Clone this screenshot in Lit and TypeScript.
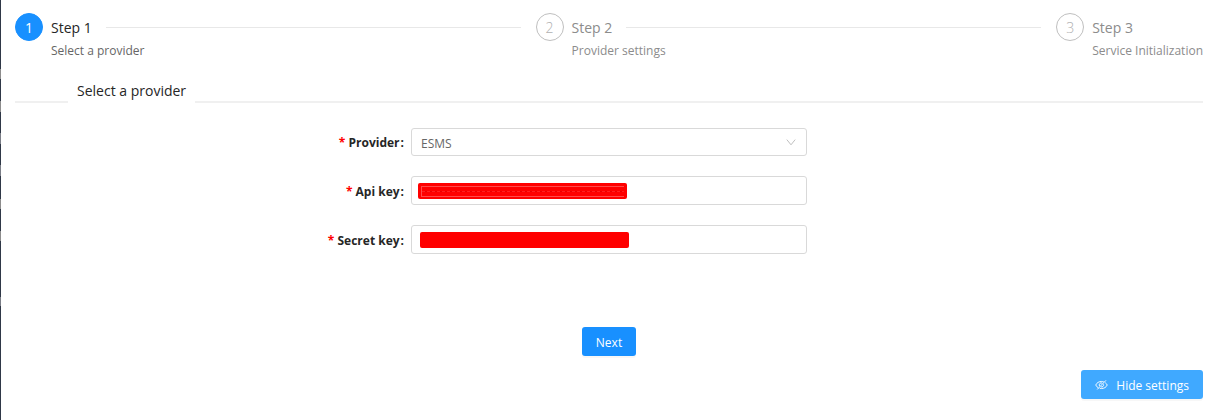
import { LitElement, html, css, svg } from "lit";
import { customElement, property } from "lit/decorators.js";

interface Step {
  title: string;
  description: string;
}

const steps: Step[] = [
  { title: "Step 1", description: "Select a provider" },
  { title: "Step 2", description: "Provider settings" },
  { title: "Step 3", description: "Service Initialization" },
];

@customElement("wizard-steps")
class WizardSteps extends LitElement {
  @property({ type: Number }) current = 0;

  static styles = css`
    :host { display: block; }
    .steps { display: flex; gap: 15px; margin: 0; padding: 0; list-style: none; }
    .step { display: flex; gap: 8px; color: #8c8c8c; }
    .step:not(:last-child) { flex: 1; }
    .badge {
      box-sizing: border-box;
      flex: none;
      width: 28px;
      height: 28px;
      border: 1px solid #bfbfbf;
      border-radius: 50%;
      color: #b0b0b0;
      font-size: 14px;
      font-weight: 300;
      line-height: 28px;
      text-align: center;
    }
    .body { flex: 1; }
    .head { display: flex; align-items: center; gap: 14px; height: 28px; }
    .title { font-size: 14px; line-height: 28px; padding-top: 2px; }
    .line { flex: 1; height: 1px; background: #e8e8e8; }
    .description { font-size: 12px; line-height: 20px; white-space: nowrap; }
    .active .badge { background: #1890ff; border-color: #1890ff; color: #fff; font-weight: 400; }
    .active .title { color: #262626; font-weight: 500; }
    .active .description { color: #666; }
  `;

  render() {
    return html`<ol class="steps">
      ${steps.map(
        (s, i) => html`<li class="step ${i === this.current ? "active" : ""}">
          <span class="badge">${i + 1}</span>
          <div class="body">
            <div class="head">
              <span class="title">${s.title}</span>
              ${i < steps.length - 1 ? html`<span class="line"></span>` : ""}
            </div>
            <div class="description">${s.description}</div>
          </div>
        </li>`
      )}
    </ol>`;
  }
}

const chevron = svg`<svg class="chevron" viewBox="0 0 10 7" width="10" height="7" fill="none" stroke="#bfbfbf" aria-hidden="true">
  <path d="M.8.6 5 5.8 9.2.6" /></svg>`;

const eyeOff = svg`<svg viewBox="0 0 14 12" width="13" height="12" fill="none" stroke="currentColor" aria-hidden="true">
  <path d="M3.7 9.1C2.4 8.4 1.3 7.300.8 6 2 3.500 4.200 2.200 7 2.200c.9 0 1.700.1 2.400.4M11 3.500c.9.600 1.700 1.500 2.200 2.500-1.200 2.500-3.400 3.800-6.200 3.800-.7 0-1.300-.1-1.900-.2" />
  <path d="M11.800 1 2.400 10.800M4.900 7.200A2.300 2.300 0 0 1 7.800 3.900M9.200 5.300A2.300 2.300 0 0 1 6.400 8.100" /></svg>`;

@customElement("app-root")
class AppRoot extends LitElement {
  static styles = css`
    :host {
      display: block;
      box-sizing: border-box;
      min-height: 100vh;
      padding: 13px 13px 21px 15px;
      background:
        linear-gradient(#8c8c8c, #8c8c8c) 0 69px / 1px 10px no-repeat,
        linear-gradient(#8c8c8c, #8c8c8c) 0 101px / 1px 11px no-repeat,
        linear-gradient(#7a7d86, #7a7d86) 0 133px / 1px 11px no-repeat,
        linear-gradient(#7a7d86, #7a7d86) 0 165px / 1px 11px no-repeat,
        linear-gradient(#8c8c8c, #8c8c8c) 0 199px / 1px 10px no-repeat,
        linear-gradient(#8c8c8c, #8c8c8c) 0 231px / 1px 10px no-repeat,
        linear-gradient(#7a7d86, #7a7d86) 0 297px / 1px 9px no-repeat,
        linear-gradient(#2f3847, #2f3847) 0 0 / 1px 100% no-repeat,
        #fff;
      font-family: "Open Sans", "Noto Sans", sans-serif;
      font-size: 12px;
      color: #262626;
    }
    .divider { display: flex; align-items: flex-end; margin: 20px 0 0; }
    .divider::before, .divider::after { content: ""; height: 2px; background: #f0f0f0; }
    .divider::before { flex: 0 0 53px; }
    .divider::after { flex: 1; }
    .heading { margin: 0; padding: 0 9px 2px; font-size: 14px; font-weight: 500; line-height: 20px; }
    .form { display: flex; flex-direction: column; gap: 20px; margin-top: 25px; }
    .row { display: grid; grid-template-columns: repeat(3, 1fr); align-items: center; }
    .label { padding: 2px 7px 0 0; text-align: right; font-weight: 700; line-height: 20px; }
    .colon { margin-left: 1px; }
    .required { color: #f00; }
    .field { position: relative; display: flex; }
    .input {
      box-sizing: border-box;
      width: 100%;
      height: 29px;
      margin: 0;
      padding: 2px 9px 0;
      border: 1px solid #d9d9d9;
      border-radius: 3px;
      background: #fff;
      color: #666;
      font: inherit;
      appearance: none;
    }
    .select { height: 28px; }
    .chevron { position: absolute; right: 11px; top: 11px; }
    .mask {
      position: absolute;
      top: 7px;
      width: 209px;
      height: 16px;
      border-radius: 2px;
      background: #f00;
    }
    .mask.api { left: 7px; }
    .mask.api::before {
      content: "";
      position: absolute;
      inset: 3px 3px 2px;
      border: 1px solid #ff4a4a;
      border-right: 0;
      background: repeating-linear-gradient(90deg, #ff2020 0 3px, #e80000 3px 5px) 0 4px / 100% 1px no-repeat;
    }
    .mask.secret { left: 9px; }
    .actions { display: flex; justify-content: center; margin-top: 73px; }
    .footer { display: flex; justify-content: flex-end; margin-top: 14px; }
    .button {
      display: flex;
      align-items: center;
      gap: 8px;
      height: 29px;
      padding: 1px 14px 0;
      border: 0;
      border-radius: 3px;
      background: #1890ff;
      color: #fff;
      font: inherit;
      box-shadow: 0 2px 0 rgba(0, 0, 0, 0.03);
    }
    .button.light { background: #40a9ff; }
  `;

  private label(id: string, text: string) {
    return html`<label class="label" for=${id}><span class="required">*</span> ${text}<span class="colon">:</span></label>`;
  }

  render() {
    return html`
      <wizard-steps .current=${0}></wizard-steps>
      <div class="divider"><h2 class="heading">Select a provider</h2></div>
      <form class="form" @submit=${(e: Event) => e.preventDefault()}>
        <div class="row">
          ${this.label("provider", "Provider")}
          <div class="field">
            <select class="input select" id="provider"><option>ESMS</option></select>
            ${chevron}
          </div>
        </div>
        <div class="row">
          ${this.label("api", "Api key")}
          <div class="field"><input class="input" id="api" type="text" /><span class="mask api"></span></div>
        </div>
        <div class="row">
          ${this.label("secret", "Secret key")}
          <div class="field"><input class="input" id="secret" type="text" /><span class="mask secret"></span></div>
        </div>
      </form>
      <div class="actions"><button class="button" type="button">Next</button></div>
      <div class="footer"><button class="button light" type="button">${eyeOff}Hide settings</button></div>
    `;
  }
}
